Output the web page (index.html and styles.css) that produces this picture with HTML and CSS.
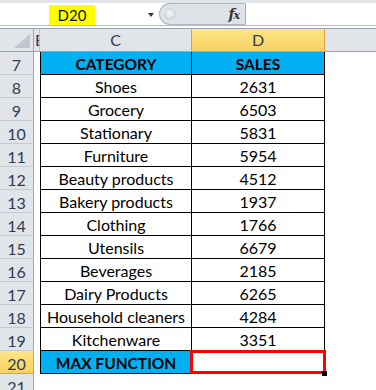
FILE: index.html
```html
<!DOCTYPE html>
<html>
<head>
<meta charset="utf-8">
<link rel="stylesheet" href="styles.css">
</head>
<body>
<div class="app">
  <div class="formula-bar">
    <div class="name-box">
      <span class="cell-ref">D20</span>
      <span class="dropdown"></span>
    </div>
    <div class="fx-control">
      <span class="knob"></span>
      <span class="fx">f<span class="fx-x">x</span></span>
    </div>
    <div class="formula-input"></div>
  </div>
  <div class="bar-gap"></div>
  <div class="sheet">
    <div class="corner"><svg width="16" height="14" viewBox="0 0 16 14"><polygon points="16,0 16,14 0,14" fill="#c2c6cc"/></svg></div>
    <div class="colhead colhead-b">B</div>
    <div class="colhead">C</div>
    <div class="colhead colhead-sel">D</div>
    <div class="colhead colhead-e"></div>

    <div class="rowhead">7</div><div class="bcell"></div><div class="cell ccell head">CATEGORY</div><div class="cell dcell head">SALES</div><div class="ecell"></div>
    <div class="rowhead">8</div><div class="bcell"></div><div class="cell ccell">Shoes</div><div class="cell dcell">2631</div><div class="ecell"></div>
    <div class="rowhead">9</div><div class="bcell"></div><div class="cell ccell">Grocery</div><div class="cell dcell">6503</div><div class="ecell"></div>
    <div class="rowhead">10</div><div class="bcell"></div><div class="cell ccell">Stationary</div><div class="cell dcell">5831</div><div class="ecell"></div>
    <div class="rowhead">11</div><div class="bcell"></div><div class="cell ccell">Furniture</div><div class="cell dcell">5954</div><div class="ecell"></div>
    <div class="rowhead">12</div><div class="bcell"></div><div class="cell ccell">Beauty products</div><div class="cell dcell">4512</div><div class="ecell"></div>
    <div class="rowhead">13</div><div class="bcell"></div><div class="cell ccell">Bakery products</div><div class="cell dcell">1937</div><div class="ecell"></div>
    <div class="rowhead">14</div><div class="bcell"></div><div class="cell ccell">Clothing</div><div class="cell dcell">1766</div><div class="ecell"></div>
    <div class="rowhead">15</div><div class="bcell"></div><div class="cell ccell">Utensils</div><div class="cell dcell">6679</div><div class="ecell"></div>
    <div class="rowhead">16</div><div class="bcell"></div><div class="cell ccell">Beverages</div><div class="cell dcell">2185</div><div class="ecell"></div>
    <div class="rowhead">17</div><div class="bcell"></div><div class="cell ccell">Dairy Products</div><div class="cell dcell">6265</div><div class="ecell"></div>
    <div class="rowhead">18</div><div class="bcell"></div><div class="cell ccell">Household cleaners</div><div class="cell dcell">4284</div><div class="ecell"></div>
    <div class="rowhead">19</div><div class="bcell"></div><div class="cell ccell">Kitchenware</div><div class="cell dcell">3351</div><div class="ecell"></div>
    <div class="rowhead rowhead-sel">20</div><div class="bcell"></div><div class="cell ccell head">MAX FUNCTION</div><div class="cell dcell selected"></div><div class="ecell"></div>
    <div class="rowhead">21</div><div class="bcell"></div><div class="blank"></div><div class="blank"></div><div class="ecell"></div>
  </div>
</div>
</body>
</html>
```
FILE: styles.css
```css
* { box-sizing: border-box; }
html, body { margin: 0; padding: 0; background: #fff; }
body { font-family: Lato, "Liberation Sans", sans-serif; width: 376px; height: 390px; overflow: hidden; }

.app { width: 376px; }

.formula-bar {
  display: flex;
  height: 26px;
  border-top: 3px solid #e2e5e9;
  border-bottom: 1px solid #b7bcc4;
  background: #fff;
}
.name-box {
  width: 159px;
  display: flex;
  align-items: flex-start;
}
.cell-ref {
  margin-left: 49px;
  margin-top: 2px;
  width: 46px;
  height: 20px;
  background: #ffff00;
  font-size: 15px;
  line-height: 20px;
  text-align: center;
  color: #111;
}
.dropdown {
  margin-left: 53px;
  margin-top: 10px;
  width: 0;
  height: 0;
  border-left: 3.5px solid transparent;
  border-right: 3.5px solid transparent;
  border-top: 4px solid #3a3a3a;
}
.fx-control {
  width: 87px;
  display: flex;
  align-items: center;
  justify-content: space-between;
  background: #dfe2e7;
  border: 1px solid #b2b7bf;
  border-right: 1px solid #a9aeb6;
  border-radius: 12px 0 0 12px;
  padding: 0 6px 0 5px;
}
.knob {
  width: 10px;
  height: 10px;
  border-radius: 50%;
  background: radial-gradient(circle at 45% 40%, #f7f8fa 0%, #dadde2 60%, #c6cad0 100%);
  box-shadow: 0 0 0 1px #cdd1d6;
}
.fx {
  font-family: "DejaVu Serif", "Liberation Serif", serif;
  font-style: italic;
  font-weight: bold;
  font-size: 14px;
  color: #333;
  letter-spacing: -1px;
}
.fx-x { font-size: 11px; }
.formula-input { flex: 1; background: #fff; }

.bar-gap {
  height: 3px;
  background: #fff;
  border-bottom: 1px solid #9ea4ad;
}

.sheet {
  display: grid;
  grid-template-columns: 34px 6px 152px 133px 1fr;
  grid-template-rows: 23px repeat(14, 23px) 20px;
}

.corner, .colhead, .rowhead {
  background: #e1e4e9;
  color: #2e3d50;
  font-size: 16px;
}
.corner {
  border-right: 1px solid #a2a8b0;
  border-bottom: 1px solid #9ea4ad;
  display: flex;
  align-items: flex-end;
  justify-content: flex-end;
  padding: 0 3px 3px 0;
}
.colhead {
  border-right: 1px solid #a2a8b0;
  border-bottom: 1px solid #9ea4ad;
  text-align: center;
  line-height: 22px;
}
.colhead-b {
  overflow: hidden;
  text-align: left;
  padding-left: 1px;
  white-space: nowrap;
  border-right: 1px solid #c0c4ca;
}
.colhead-sel {
  background: linear-gradient(#fde589, #f9d160);
  border-right: 1px solid #e2a23f;
  border-bottom: 1px solid #e2a23f;
}
.colhead-e { border-right: none; }

.rowhead {
  border-right: 1px solid #a2a8b0;
  border-bottom: 1px solid #c6cad0;
  text-align: center;
  line-height: 23px;
  padding-top: 1px;
}
.rowhead-sel {
  background: linear-gradient(#fde589, #f9d160);
  border-right: 1px solid #e2a23f;
  border-bottom: 1px solid #e2a23f;
}

.bcell, .ecell, .blank { background: #fff; }

.cell {
  font-size: 16px;
  color: #000;
  text-align: center;
  line-height: 22px;
  padding-top: 1px;
  border-bottom: 1px solid #000;
  border-right: 1px solid #000;
  white-space: nowrap;
}
.ccell { border-left: 1px solid #000; }
.head {
  background: #00b0f0;
  font-weight: bold;
  font-size: 15.5px;
}
.selected { position: relative; }
.selected::before {
  content: "";
  position: absolute;
  left: -2px;
  top: -1px;
  right: -2px;
  bottom: -1px;
  border: 3px solid #ff0000;
}
.selected::after {
  content: "";
  position: absolute;
  right: -3px;
  bottom: -3px;
  width: 5px;
  height: 5px;
  background: #000;
}
```
